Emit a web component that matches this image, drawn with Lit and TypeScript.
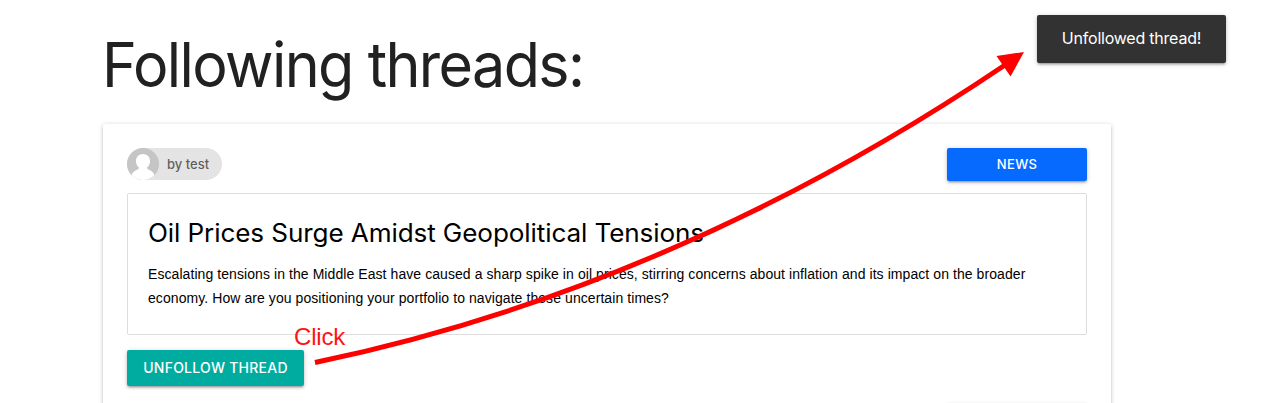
import { LitElement, html, css } from "lit";
import { customElement } from "lit/decorators.js";

@customElement("app-root")
export class AppRoot extends LitElement {
  static styles = css`
    :host {
      display: block;
      position: relative;
      height: 403px;
      overflow: hidden;
      background: #fff;
      font-family: Inter, sans-serif;
      color: rgba(0, 0, 0, 0.87);
    }
    * { box-sizing: border-box; }
    .container { width: 1008px; margin-left: 103px; padding-top: 31px; }
    h1 {
      margin: 0 0 25px -1px;
      height: 68px;
      font-size: 62px;
      line-height: 68px;
      font-weight: 430;
      letter-spacing: -1.7px;
      transform: scaleX(0.955);
      transform-origin: left;
      white-space: nowrap;
      color: #212121;
    }
    .panel {
      height: 400px;
      padding: 24px;
      border-radius: 2px;
      background: #fff;
      box-shadow: 0 2px 2px 0 rgba(0, 0, 0, 0.14), 0 3px 1px -2px rgba(0, 0, 0, 0.12), 0 1px 5px 0 rgba(0, 0, 0, 0.2);
    }
    .top { display: flex; justify-content: space-between; align-items: flex-start; height: 45px; }
    .chip {
      display: flex;
      align-items: center;
      width: 95px;
      height: 32px;
      border-radius: 16px;
      background: #e4e4e4;
      color: rgba(0, 0, 0, 0.6);
      font-size: 13px;
      font-weight: 500;
      white-space: nowrap;
    }
    .avatar { width: 32px; height: 32px; margin-right: 8px; flex: none; }
    .btn {
      display: flex;
      align-items: center;
      justify-content: center;
      border-radius: 2px;
      color: #fff;
      white-space: nowrap;
      box-shadow: 0 2px 2px 0 rgba(0, 0, 0, 0.14), 0 3px 1px -2px rgba(0, 0, 0, 0.12), 0 1px 5px 0 rgba(0, 0, 0, 0.2);
    }
    .news { width: 140px; height: 33px; padding-bottom: 2px; background: #066aff; font-size: 13px; font-weight: 550; letter-spacing: 0.4px; }
    .unfollow { width: 177px; height: 36px; padding-bottom: 1px; background: #00ac9f; font-size: 14px; font-weight: 500; letter-spacing: 0.25px; }
    .thread {
      height: 142px;
      margin-bottom: 15px;
      padding: 20px;
      border: 1px solid #ddd;
      border-radius: 2px;
      color: #000;
    }
    h2 { margin: 0 0 9px; height: 39px; line-height: 39px; font-size: 25px; font-weight: 380; white-space: nowrap; letter-spacing: -0.1px; transform: scaleX(1.044); transform-origin: left; }
    p { margin: 0; font: 14px/24px "Liberation Sans", sans-serif; letter-spacing: 0.073px; white-space: nowrap; }
    .next { margin: 18px 0 0 820px; }
    .toast {
      position: absolute;
      left: 1037px;
      top: 15px;
      width: 189px;
      height: 48px;
      padding-bottom: 2px;
      display: flex;
      align-items: center;
      justify-content: center;
      border-radius: 2px;
      background: #323232;
      color: #fff;
      font-size: 16px;
      letter-spacing: -0.22px;
      white-space: nowrap;
      box-shadow: 0 2px 2px 0 rgba(0, 0, 0, 0.14), 0 3px 1px -2px rgba(0, 0, 0, 0.12), 0 1px 5px 0 rgba(0, 0, 0, 0.2);
    }
    .arrow { position: absolute; left: 0; top: 0; }
    .note { position: absolute; left: 294px; top: 323px; font: 24px/28px "Liberation Sans", sans-serif; letter-spacing: -0.2px; color: #ff1414; }
  `;

  render() {
    return html`
      <main class="container">
        <h1>Following threads:</h1>
        <section class="panel">
          <div class="top">
            <div class="chip">
              <svg class="avatar" viewBox="0 0 32 32">
                <defs><clipPath id="round"><circle cx="16" cy="16" r="16" /></clipPath></defs>
                <g clip-path="url(#round)">
                  <rect width="32" height="32" fill="#c5c5c5" />
                  <path fill="#fff" d="M16 6c-4.200 0-7 3-7 7.200 0 2.800 1.200 5 3 6.300 0 1.400-1.300 2-3 2.800-2.300 1.100-3.900 2.600-4.800 5.700V32h23.600v-4c-.9-3.100-2.500-4.600-4.800-5.700-1.700-.8-3-1.400-3-2.800 1.800-1.300 3-3.500 3-6.300C23 9 20.200 6 16 6z" />
                </g>
              </svg>
              <span>by test</span>
            </div>
            <div class="btn news">NEWS</div>
          </div>
          <article class="thread">
            <h2>Oil Prices Surge Amidst Geopolitical Tensions</h2>
            <p>
              Escalating tensions in the Middle East have caused a sharp spike in oil prices, stirring concerns about inflation and its impact on the broader<br />economy. How are you positioning your portfolio to navigate these uncertain times?
            </p>
          </article>
          <div class="btn unfollow">UNFOLLOW THREAD</div>
          <div class="btn news next"></div>
        </section>
      </main>
      <div class="toast">Unfollowed thread!</div>
      <div class="note">Click</div>
      <svg class="arrow" width="1287" height="403" viewBox="0 0 1287 403">
        <path d="M315 362.500Q676 287 1005 65" fill="none" stroke="#f00" stroke-width="5" />
        <path d="M1024 52L996.500 56L1010.500 76.500Z" fill="#f00" />
      </svg>
    `;
  }
}
